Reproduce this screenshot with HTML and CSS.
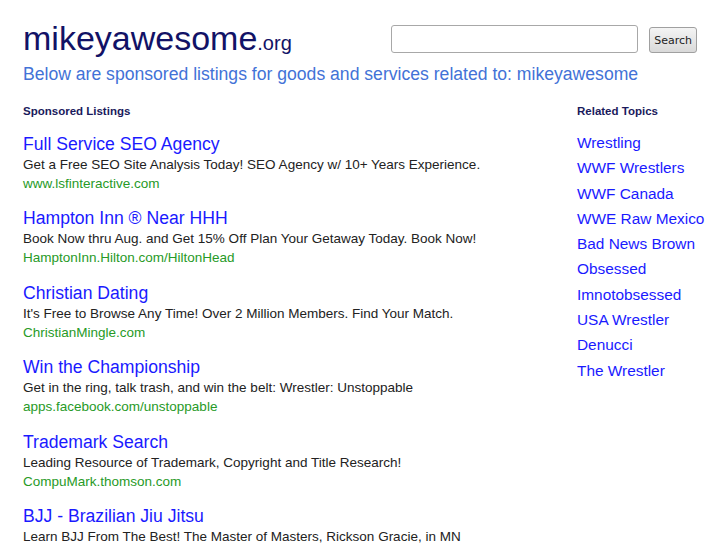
FILE: index.html
```html
<!DOCTYPE html>
<html>
<head>
<meta charset="utf-8">
<title>mikeyawesome.org</title>
<link rel="stylesheet" href="styles.css">
</head>
<body>
<div class="page">
  <header class="header">
    <div class="top">
      <h1 class="logo">mikeyawesome<span class="tld">.org</span></h1>
      <form class="search">
        <input class="search-input" type="text">
        <button class="search-btn" type="button">Search</button>
      </form>
    </div>
    <p class="tagline">Below are sponsored listings for goods and services related to: mikeyawesome</p>
  </header>
  <div class="main">
    <section class="listings">
      <h2 class="section-title">Sponsored Listings</h2>
      <div class="ad">
        <a class="ad-title">Full Service SEO Agency</a>
        <div class="ad-desc">Get a Free SEO Site Analysis Today! SEO Agency w/ 10+ Years Experience.</div>
        <div class="ad-url">www.lsfinteractive.com</div>
      </div>
      <div class="ad">
        <a class="ad-title">Hampton Inn ® Near HHH</a>
        <div class="ad-desc">Book Now thru Aug. and Get 15% Off Plan Your Getaway Today. Book Now!</div>
        <div class="ad-url">HamptonInn.Hilton.com/HiltonHead</div>
      </div>
      <div class="ad">
        <a class="ad-title">Christian Dating</a>
        <div class="ad-desc">It's Free to Browse Any Time! Over 2 Million Members. Find Your Match.</div>
        <div class="ad-url">ChristianMingle.com</div>
      </div>
      <div class="ad">
        <a class="ad-title">Win the Championship</a>
        <div class="ad-desc">Get in the ring, talk trash, and win the belt: Wrestler: Unstoppable</div>
        <div class="ad-url">apps.facebook.com/unstoppable</div>
      </div>
      <div class="ad">
        <a class="ad-title">Trademark Search</a>
        <div class="ad-desc">Leading Resource of Trademark, Copyright and Title Research!</div>
        <div class="ad-url">CompuMark.thomson.com</div>
      </div>
      <div class="ad">
        <a class="ad-title">BJJ - Brazilian Jiu Jitsu</a>
        <div class="ad-desc">Learn BJJ From The Best! The Master of Masters, Rickson Gracie, in MN</div>
      </div>
    </section>
    <aside class="related">
      <h2 class="section-title">Related Topics</h2>
      <ul class="topics">
        <li><a>Wrestling</a></li>
        <li><a>WWF Wrestlers</a></li>
        <li><a>WWF Canada</a></li>
        <li><a>WWE Raw Mexico</a></li>
        <li><a>Bad News Brown</a></li>
        <li><a>Obsessed</a></li>
        <li><a>Imnotobsessed</a></li>
        <li><a>USA Wrestler</a></li>
        <li><a>Denucci</a></li>
        <li><a>The Wrestler</a></li>
      </ul>
    </aside>
  </div>
</div>
</body>
</html>
```

FILE: styles.css
```css
html, body {
  margin: 0;
  padding: 0;
  background: #fff;
}
body {
  font-family: "Liberation Sans", Arial, sans-serif;
  overflow: hidden;
}
.page {
  padding: 18px 0 0 23px;
}
.top {
  display: flex;
  align-items: flex-start;
}
.logo {
  margin: 0;
  font-weight: normal;
  font-size: 34px;
  line-height: 40px;
  color: #121266;
  flex: 1;
}
.tld {
  font-size: 20px;
}
.search {
  display: flex;
  align-items: flex-start;
  margin: 7px 30px 0 0;
}
.search-input {
  box-sizing: border-box;
  width: 247px;
  height: 28px;
  border: 1px solid #a8a8a8;
  border-radius: 3px;
  margin: 0 11px 0 0;
  padding: 0 4px;
  background: #fff;
}
.search-btn {
  box-sizing: border-box;
  height: 26px;
  margin-top: 2px;
  padding: 0 4px;
  font-family: "DejaVu Sans", sans-serif;
  font-size: 11px;
  color: #222;
  border: 1px solid #a0a0a0;
  border-radius: 3px;
  background: linear-gradient(#f4f4f4, #d9d9d9);
}
.tagline {
  margin: 0;
  font-size: 17.6px;
  line-height: 22px;
  color: #4272d7;
}
.main {
  display: flex;
  margin-top: 18px;
}
.listings {
  flex: 1;
}
.related {
  width: 150px;
}
.section-title {
  margin: 0;
  font-size: 11.5px;
  line-height: 16px;
  font-weight: bold;
  color: #1a1a5c;
}
.listings .section-title {
  margin-bottom: 14px;
}
.ad {
  margin-bottom: 14.4px;
}
.ad-title {
  display: block;
  font-size: 17.6px;
  line-height: 22px;
  color: #1a1aff;
}
.ad-desc {
  font-size: 13.5px;
  line-height: 20px;
  color: #222;
}
.ad-url {
  font-size: 13.5px;
  line-height: 18px;
  color: #279a27;
}
.topics {
  list-style: none;
  margin: 11px 0 0;
  padding: 0;
}
.topics li {
  font-size: 15.4px;
  line-height: 25.3px;
  color: #1a1aff;
  white-space: nowrap;
}
```
